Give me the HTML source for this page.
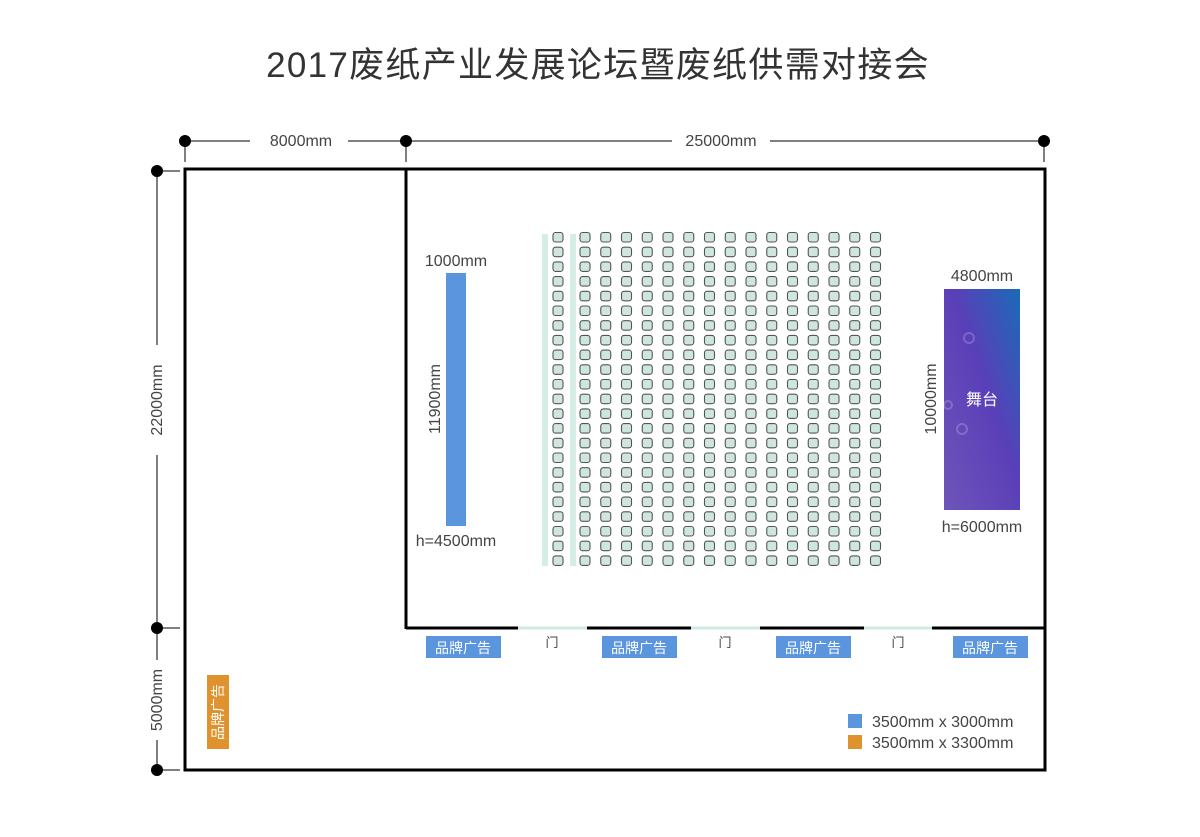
<!DOCTYPE html>
<html><head><meta charset="utf-8">
<style>
body{margin:0;width:1200px;height:832px;background:#fff;overflow:hidden;font-family:"Liberation Sans","Noto Sans CJK SC",sans-serif}
</style></head><body>
<svg id="s" width="1200" height="832" xmlns="http://www.w3.org/2000/svg" font-family="Liberation Sans, Noto Sans CJK SC, sans-serif">
<defs>
<linearGradient id="g" x1="1" y1="0" x2="0" y2="1">
<stop offset="0" stop-color="#1a6bb8"/><stop offset="0.45" stop-color="#5a3fb8"/><stop offset="1" stop-color="#6e55b8"/>
</linearGradient>
</defs>
<text x="598" y="77" text-anchor="middle" font-size="35" fill="#333" letter-spacing="1.3">2017废纸产业发展论坛暨废纸供需对接会</text>
<g stroke="#000" stroke-width="1">
<line x1="185" y1="141" x2="250" y2="141"/><line x1="348" y1="141" x2="406" y2="141"/>
<line x1="406" y1="141" x2="672" y2="141"/><line x1="770" y1="141" x2="1044" y2="141"/>
<line x1="185" y1="141" x2="185" y2="162"/><line x1="406" y1="141" x2="406" y2="162"/><line x1="1044" y1="141" x2="1044" y2="162"/>
<line x1="157" y1="171" x2="157" y2="345"/><line x1="157" y1="455" x2="157" y2="628"/>
<line x1="157" y1="628" x2="157" y2="660"/><line x1="157" y1="740" x2="157" y2="770"/>
<line x1="157" y1="171" x2="180" y2="171"/><line x1="157" y1="628" x2="180" y2="628"/><line x1="157" y1="770" x2="180" y2="770"/>
</g>
<g fill="#000">
<circle cx="185" cy="141" r="6"/><circle cx="406" cy="141" r="6"/><circle cx="1044" cy="141" r="6"/>
<circle cx="157" cy="171" r="6"/><circle cx="157" cy="628" r="6"/><circle cx="157" cy="770" r="6"/>
</g>
<g font-size="16" fill="#444">
<text x="301" y="146" text-anchor="middle">8000mm</text>
<text x="721" y="146" text-anchor="middle">25000mm</text>
<text transform="translate(162,400) rotate(-90)" text-anchor="middle">22000mm</text>
<text transform="translate(162,700) rotate(-90)" text-anchor="middle">5000mm</text>
<text x="456" y="266" text-anchor="middle">1000mm</text>
<text transform="translate(440,399) rotate(-90)" text-anchor="middle">11900mm</text>
<text x="456" y="546" text-anchor="middle">h=4500mm</text>
<text x="982" y="281" text-anchor="middle">4800mm</text>
<text transform="translate(936,399) rotate(-90)" text-anchor="middle">10000mm</text>
<text x="982" y="532" text-anchor="middle">h=6000mm</text>
<text x="872" y="727">3500mm x 3000mm</text>
<text x="872" y="748">3500mm x 3300mm</text>
</g>
<rect x="185" y="169" width="860" height="601" fill="none" stroke="#000" stroke-width="3"/>
<g stroke-width="3">
<line x1="406" y1="169" x2="406" y2="629" stroke="#000"/>
<line x1="406" y1="628" x2="518" y2="628" stroke="#000"/>
<line x1="518" y1="628" x2="587" y2="628" stroke="#cfe9e4"/>
<line x1="587" y1="628" x2="691" y2="628" stroke="#000"/>
<line x1="691" y1="628" x2="760" y2="628" stroke="#cfe9e4"/>
<line x1="760" y1="628" x2="864" y2="628" stroke="#000"/>
<line x1="864" y1="628" x2="932" y2="628" stroke="#cfe9e4"/>
<line x1="932" y1="628" x2="1045" y2="628" stroke="#000"/>
</g>
<rect x="446" y="273" width="20" height="253" fill="#5a95dd"/>
<rect x="944" y="289" width="76" height="221" fill="url(#g)"/>
<g fill="none" stroke="#ffffff" stroke-opacity="0.2" stroke-width="2"><circle cx="969" cy="338" r="5"/><circle cx="962" cy="429" r="5"/><circle cx="948" cy="405" r="4"/></g>
<text x="982" y="405" text-anchor="middle" font-size="16" fill="#fff">舞台</text>
<g font-size="14" fill="#fff">
<rect x="426" y="636" width="75" height="22" fill="#5a95dd"/><text x="463" y="653" text-anchor="middle">品牌广告</text>
<rect x="602" y="636" width="75" height="22" fill="#5a95dd"/><text x="639" y="653" text-anchor="middle">品牌广告</text>
<rect x="776" y="636" width="75" height="22" fill="#5a95dd"/><text x="813" y="653" text-anchor="middle">品牌广告</text>
<rect x="953" y="636" width="75" height="22" fill="#5a95dd"/><text x="990" y="653" text-anchor="middle">品牌广告</text>
<rect x="207" y="675" width="22" height="74" fill="#e0922f"/>
<text transform="translate(223,712) rotate(-90)" text-anchor="middle">品牌广告</text>
</g>
<g font-size="13" fill="#444"><text x="552" y="647" text-anchor="middle">门</text><text x="725" y="647" text-anchor="middle">门</text><text x="898" y="647" text-anchor="middle">门</text></g>
<rect x="848" y="714" width="14" height="14" fill="#5a95dd"/>
<rect x="848" y="735" width="14" height="14" fill="#e0922f"/>
<rect x="542" y="234" width="6" height="332" fill="#d6ece6"/>
<rect x="570" y="234" width="6" height="332" fill="#d6ece6"/>
<g id="seats"></g>
</svg>
<script>
var g=document.getElementById('seats'),h='';
var xs=[558];for(var i=0;i<15;i++)xs.push(585+i*20.75);
for(var r=0;r<23;r++){var y=237+r*14.7;for(var c=0;c<16;c++){h+='<rect x="'+(xs[c]-5)+'" y="'+(y-4.5)+'" width="10" height="9.5" rx="2.5" fill="#cfe6df" stroke="#555" stroke-width="1.1"/>';}}
g.innerHTML=h;
</script>
</body></html>
